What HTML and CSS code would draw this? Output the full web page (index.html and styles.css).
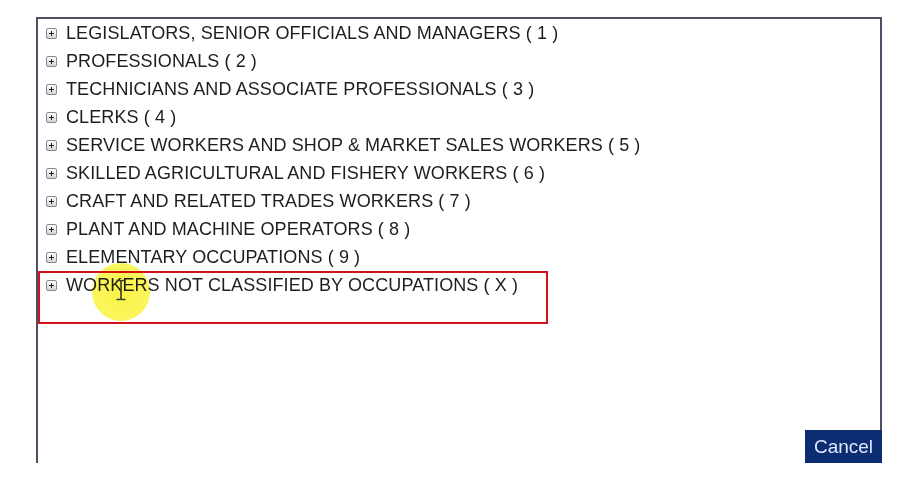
FILE: index.html
```html
<!DOCTYPE html>
<html>
<head>
<meta charset="utf-8">
<link rel="stylesheet" href="styles.css">
</head>
<body>
<div class="dialog">
  <ul class="tree">
    <li class="node"><span class="exp"></span><span class="label">LEGISLATORS, SENIOR OFFICIALS AND MANAGERS ( 1 )</span></li>
    <li class="node"><span class="exp"></span><span class="label">PROFESSIONALS ( 2 )</span></li>
    <li class="node"><span class="exp"></span><span class="label">TECHNICIANS AND ASSOCIATE PROFESSIONALS ( 3 )</span></li>
    <li class="node"><span class="exp"></span><span class="label">CLERKS ( 4 )</span></li>
    <li class="node"><span class="exp"></span><span class="label">SERVICE WORKERS AND SHOP &amp; MARKET SALES WORKERS ( 5 )</span></li>
    <li class="node"><span class="exp"></span><span class="label">SKILLED AGRICULTURAL AND FISHERY WORKERS ( 6 )</span></li>
    <li class="node"><span class="exp"></span><span class="label">CRAFT AND RELATED TRADES WORKERS ( 7 )</span></li>
    <li class="node"><span class="exp"></span><span class="label">PLANT AND MACHINE OPERATORS ( 8 )</span></li>
    <li class="node"><span class="exp"></span><span class="label">ELEMENTARY OCCUPATIONS ( 9 )</span></li>
    <li class="node last"><span class="exp"></span><span class="label">WORKERS NOT CLASSIFIED BY OCCUPATIONS ( X )</span>
      <span class="highlight"></span>
      <span class="cursor-glow"></span>
      <svg class="ibeam" width="12" height="22" viewBox="0 0 12 22"><path d="M1.5 1.5 H5 Q6 1.5 6 3 V19 Q6 20.5 5 20.5 H1.5 M10.5 1.5 H7 Q6 1.5 6 3 M6 19 Q6 20.5 7 20.5 H10.5" fill="none" stroke="#3a3a2a" stroke-width="1.6"/></svg>
    </li>
  </ul>
  <div class="footer">
    <button class="cancel">Cancel</button>
  </div>
</div>
</body>
</html>
```
FILE: styles.css
```css
html, body {
  margin: 0;
  padding: 0;
  background: #ffffff;
}
body {
  font-family: "Liberation Sans", Arial, sans-serif;
}
.dialog {
  margin: 17px 0 0 36px;
  width: 842px;
  height: 444px;
  border: 2px solid #4d4e62;
  border-bottom: none;
  display: flex;
  flex-direction: column;
  justify-content: space-between;
}
.tree {
  list-style: none;
  margin: 0;
  padding: 0;
}
.node {
  position: relative;
  height: 28px;
  display: flex;
  align-items: center;
  padding-left: 8px;
}
.exp {
  width: 9px;
  height: 9px;
  border: 1px solid #8a8a8a;
  border-radius: 2px;
  background: linear-gradient(#ffffff, #d4d4d4);
  position: relative;
  margin-right: 9px;
  flex: none;
}
.exp::before, .exp::after {
  content: "";
  position: absolute;
  background: #202020;
}
.exp::before {
  left: 2px; top: 4px; width: 5px; height: 1px;
}
.exp::after {
  left: 4px; top: 2px; width: 1px; height: 5px;
}
.label {
  font-size: 18px;
  color: #1e1e1e;
  letter-spacing: 0.1px;
  white-space: nowrap;
}
.highlight {
  position: absolute;
  left: 0;
  top: 0;
  width: 506px;
  height: 49px;
  border: 2px solid #d4121e;
  pointer-events: none;
}
.cursor-glow {
  position: absolute;
  left: 54px;
  top: -8px;
  width: 58px;
  height: 58px;
  border-radius: 50%;
  background: radial-gradient(circle, rgba(250,242,40,0.85) 0%, rgba(250,242,40,0.75) 70%, rgba(250,242,40,0.2) 100%);
  mix-blend-mode: multiply;
}
.ibeam {
  position: absolute;
  left: 77px;
  top: 8px;
}
.footer {
  display: flex;
  justify-content: flex-end;
  margin-right: -2px;
}
.cancel {
  background: #0d2d73;
  color: #dde9ff;
  border: none;
  font-family: "Liberation Sans", Arial, sans-serif;
  font-size: 19px;
  height: 33px;
  width: 77px;
  padding: 0;
}
```
